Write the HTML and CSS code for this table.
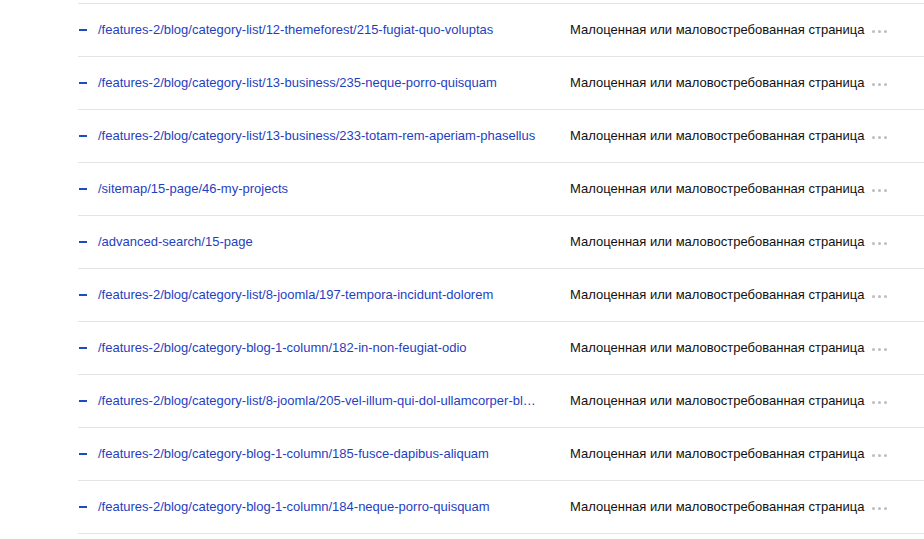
FILE: index.html
```html
<!DOCTYPE html>
<html lang="ru">
<head>
    <meta charset="UTF-8">
    <meta name="viewport" content="width=device-width, initial-scale=1.0">
    <title>Страницы</title>
    <link rel="stylesheet" href="styles.css">
</head>
<body>
    <ul class="pages">
        <li class="page-row">
            <span class="dash"></span>
            <a class="url" href="#">/features-2/blog/category-list/12-themeforest/215-fugiat-quo-voluptas</a>
            <span class="status">Малоценная или маловостребованная страница</span>
            <span class="more"><i></i><i></i><i></i></span>
        </li>
        <li class="page-row">
            <span class="dash"></span>
            <a class="url" href="#">/features-2/blog/category-list/13-business/235-neque-porro-quisquam</a>
            <span class="status">Малоценная или маловостребованная страница</span>
            <span class="more"><i></i><i></i><i></i></span>
        </li>
        <li class="page-row">
            <span class="dash"></span>
            <a class="url" href="#">/features-2/blog/category-list/13-business/233-totam-rem-aperiam-phasellus</a>
            <span class="status">Малоценная или маловостребованная страница</span>
            <span class="more"><i></i><i></i><i></i></span>
        </li>
        <li class="page-row">
            <span class="dash"></span>
            <a class="url" href="#">/sitemap/15-page/46-my-projects</a>
            <span class="status">Малоценная или маловостребованная страница</span>
            <span class="more"><i></i><i></i><i></i></span>
        </li>
        <li class="page-row">
            <span class="dash"></span>
            <a class="url" href="#">/advanced-search/15-page</a>
            <span class="status">Малоценная или маловостребованная страница</span>
            <span class="more"><i></i><i></i><i></i></span>
        </li>
        <li class="page-row">
            <span class="dash"></span>
            <a class="url" href="#">/features-2/blog/category-list/8-joomla/197-tempora-incidunt-dolorem</a>
            <span class="status">Малоценная или маловостребованная страница</span>
            <span class="more"><i></i><i></i><i></i></span>
        </li>
        <li class="page-row">
            <span class="dash"></span>
            <a class="url" href="#">/features-2/blog/category-blog-1-column/182-in-non-feugiat-odio</a>
            <span class="status">Малоценная или маловостребованная страница</span>
            <span class="more"><i></i><i></i><i></i></span>
        </li>
        <li class="page-row">
            <span class="dash"></span>
            <a class="url" href="#">/features-2/blog/category-list/8-joomla/205-vel-illum-qui-dol-ullamcorper-bl…</a>
            <span class="status">Малоценная или маловостребованная страница</span>
            <span class="more"><i></i><i></i><i></i></span>
        </li>
        <li class="page-row">
            <span class="dash"></span>
            <a class="url" href="#">/features-2/blog/category-blog-1-column/185-fusce-dapibus-aliquam</a>
            <span class="status">Малоценная или маловостребованная страница</span>
            <span class="more"><i></i><i></i><i></i></span>
        </li>
        <li class="page-row">
            <span class="dash"></span>
            <a class="url" href="#">/features-2/blog/category-blog-1-column/184-neque-porro-quisquam</a>
            <span class="status">Малоценная или маловостребованная страница</span>
            <span class="more"><i></i><i></i><i></i></span>
        </li>
    </ul>
</body>
</html>
```

FILE: styles.css
```css
body {
    margin: 0;
    padding-top: 3px;
    background: #fff;
    font-family: Arial, "Liberation Sans", sans-serif;
    font-size: 13px;
}
.pages {
    list-style: none;
    margin: 0 0 0 78px;
    padding: 0;
    border-top: 1px solid #e4e4e4;
}
.page-row {
    display: flex;
    align-items: center;
    height: 50px;
    padding-bottom: 2px;
    border-bottom: 1px solid #e4e4e4;
}
.dash {
    width: 8px;
    height: 2px;
    margin: 1px 11px 0 1px;
    background: #1d4cc2;
}
.url {
    width: 440px;
    margin-right: 32px;
    color: #1f3fbf;
    text-decoration: none;
    white-space: nowrap;
}
.status {
    color: #111;
    white-space: nowrap;
}
.more {
    display: flex;
    gap: 3px;
    margin: 5px 0 0 8px;
}
.more i {
    width: 3px;
    height: 3px;
    border-radius: 50%;
    background: #bdbdbd;
}
```
